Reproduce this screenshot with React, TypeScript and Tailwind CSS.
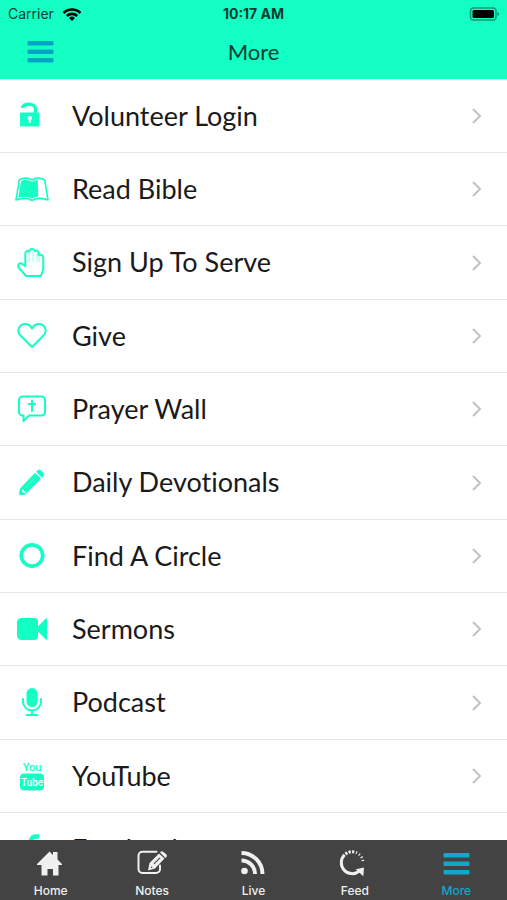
import { useState } from 'react';
import type { ReactNode } from 'react';

function Icon({ children }: { children: ReactNode }) {
  return (
    <svg viewBox="0 0 32 32" width="32" height="32" fill="none" stroke="currentColor" strokeWidth="2" strokeLinecap="round" strokeLinejoin="round" overflow="visible" aria-hidden="true">
      {children}
    </svg>
  );
}

const items: { label: string; icon: ReactNode }[] = [
  {
    label: 'Volunteer Login',
    icon: (
      <Icon>
        <path d="M6.500 8C6.500 3 19.500 2.500 19.500 9v5" strokeWidth="3.500" strokeLinecap="butt" />
        <path fillRule="evenodd" stroke="none" fill="currentColor" d="M5 12.500h17.500a1 1 0 0 1 1 1v12a1 1 0 0 1-1 1H5a1 1 0 0 1-1-1v-12a1 1 0 0 1 1-1zM13.800 16a2 2 0 0 0-1 3.800v3h2v-3a2 2 0 0 0-1-3.800z" />
      </Icon>
    ),
  },
  {
    label: 'Read Bible',
    icon: (
      <Icon>
        <path d="M3.300 7C7 4.500 12.500 4.500 16 7c3.500-2.500 9-2.500 12.700 0L32 27c-4.500-2-12-2.500-16 .5-4-3-11.500-2.500-16-.5z" strokeWidth="1.600" />
        <path d="M5 8.300c3.500-2 8-1.500 11 .7 1.500-1.200 3.500-2 5.700-2L22.300 23.500q-3.500.2-6.300 2Q10 22.500 2.300 24.500z" stroke="none" fill="currentColor" />
      </Icon>
    ),
  },
  {
    label: 'Sign Up To Serve',
    icon: (
      <Icon>
        <path d="M10 29 3 21c-2-3 0-5.500 3-4.300l3.300 2.600V6.500c0-2.500 2.500-3.200 3.900-2C13.800 1.200 18 1.200 18.700 4c1.800-1 4 0 4 2.500V8c2.500-.800 4.600.500 4.600 3v11L25 29z" />
        <path d="M13.200 5v9.500M17 5v9.500M21 6v8.500M23 8v6.500" strokeWidth="1" opacity=".45" />
      </Icon>
    ),
  },
  {
    label: 'Give',
    icon: (
      <Icon>
        <path d="M16 27 4.500 15.500C-1 9.500 5 3.500 9.500 4 13 4.500 15 6.500 16 8.500c1-2 3-4 6.500-4.500 4.500-.500 10.500 5.500 5 11.500z" />
      </Icon>
    ),
  },
  {
    label: 'Prayer Wall',
    icon: (
      <Icon>
        <path d="M6.500 3.500h19A3.500 3.500 0 0 1 29 7v12a3.500 3.500 0 0 1-3.500 3.500H13L7.500 28v-5.500h-1A3.500 3.500 0 0 1 3 19V7a3.500 3.500 0 0 1 3.500-3.500z" />
        <path d="M16 7.500V18M12.800 11h6.400" />
      </Icon>
    ),
  },
  {
    label: 'Daily Devotionals',
    icon: (
      <Icon>
        <g stroke="none" fill="currentColor">
          <path d="m20 4.800 1.800-1.600a2 2 0 0 1 2.800 0l3 3a2 2 0 0 1 0 2.800L26 10.700z" />
          <path fillRule="evenodd" d="m19 5.800 6 6L10 26.500a4 4 0 0 1-2 1.200l-3.500.5Q3 28.200 3 26.700l.7-4a4 4 0 0 1 1-2zM6.500 22.500l-.6 1.800 2 2 1.800-.6v-1.200H8v-2z" />
        </g>
        <path d="m10 20 9.500-9.500" stroke="white" strokeWidth=".5" opacity=".6" />
      </Icon>
    ),
  },
  {
    label: 'Find A Circle',
    icon: (
      <Icon>
        <circle cx="16" cy="15.500" r="10.700" strokeWidth="3.700" />
      </Icon>
    ),
  },
  {
    label: 'Sermons',
    icon: (
      <Icon>
        <path stroke="none" fill="currentColor" d="M5.500 5H18a4 4 0 0 1 4 4v4.500l7.500-7.800Q31 4.500 31 6v20q0 1.500-1.500.3L22 18.500V23a4 4 0 0 1-4 4H5.500A4.500 4.500 0 0 1 1 22.500v-13A4.500 4.500 0 0 1 5.500 5z" />
      </Icon>
    ),
  },
  {
    label: 'Podcast',
    icon: (
      <Icon>
        <rect x="10.500" y="1" width="11" height="19" rx="5.500" stroke="none" fill="currentColor" />
        <path d="M7 12v2.500a9 9 0 0 0 18 0V12M16 23.500V28M10.500 28h11" />
      </Icon>
    ),
  },
  {
    label: 'YouTube',
    icon: (
      <Icon>
        <rect x="4" y="13.500" width="24" height="17" rx="4" stroke="none" fill="currentColor" />
        <g stroke="none" textAnchor="middle" className="font-[Roboto,sans-serif] font-medium">
          <text x="16" y="11" fontSize="11" fill="currentColor">You</text>
          <text x="16" y="26" fontSize="10" fill="white">Tube</text>
        </g>
      </Icon>
    ),
  },
  {
    label: 'Facebook',
    icon: (
      <Icon>
        <path d="M23 3.500h-2.500c-4 0-5.500 1.500-5.500 5.500v20M10 14h12" strokeWidth="4.500" strokeLinecap="butt" />
      </Icon>
    ),
  },
];

const bars = (
  <g stroke="none" fill="currentColor">
    <rect x="3.500" y="5" width="26" height="4.600" rx="1" />
    <rect x="3.500" y="13.500" width="26" height="4.600" rx="1" />
    <rect x="3.500" y="22" width="26" height="4.600" rx="1" />
  </g>
);

const tabs: { label: string; icon: ReactNode }[] = [
  {
    label: 'Home',
    icon: <path stroke="none" fill="currentColor" d="M14.500 3.500 18 7V4h4.500v7.500L27 16v1h-3.500v10.500H18V21h-5.500v6.500h-6V17H2v-1z" />,
  },
  {
    label: 'Notes',
    icon: (
      <>
        <path d="M20.500 3.800h-14a4 4 0 0 0-4 4V21a4 4 0 0 0 4 4H20a4 4 0 0 0 4-4v-3.500" />
        <path fillRule="evenodd" stroke="none" fill="currentColor" d="M12 22.500 13.500 15 23 5.500l5.500 5-9.500 10zM15.300 18.300l-.5 1.800 1.800-.4zM17.500 15.500l.8.800 6-6-.8-.8z" />
        <path stroke="none" fill="currentColor" d="m24 4.500 1-1q1.200-.8 2.500.5l3 2.500q1 1.300 0 2.500l-1 .9z" />
      </>
    ),
  },
  {
    label: 'Live',
    icon: (
      <>
        <circle cx="7.500" cy="23" r="3.300" stroke="none" fill="currentColor" />
        <path d="M4.500 12.500A13.500 13.500 0 0 1 18 26M4.500 5A21 21 0 0 1 25.500 26" strokeWidth="4" strokeLinecap="butt" />
      </>
    ),
  },
  {
    label: 'Feed',
    icon: (
      <>
        <path d="M5.600 6.800a11 11 0 0 0 14.500 16.500" strokeWidth="3" strokeLinecap="butt" />
        <path stroke="none" fill="currentColor" d="m16.800 21.300 8.200-1.800-.7 8.700z" />
        <path d="M6.500 6A11 11 0 0 1 15.500 4" strokeWidth="3" strokeLinecap="butt" strokeDasharray="2.200 1.300" />
        <path d="M17 4.500a11 11 0 0 1 7 9" strokeWidth="2.500" strokeLinecap="butt" strokeDasharray="1.200 2.200" />
      </>
    ),
  },
  { label: 'More', icon: bars },
];

function StatusBar() {
  return (
    <div className="grid h-7 grid-cols-3 items-center px-2 font-[Inter,sans-serif] text-sm text-[#053f32]">
      <div className="flex items-center gap-2">
        <span>Carrier</span>
        <svg viewBox="0 0 20 15" width="20" height="15" fill="none" stroke="black" strokeWidth="2.600" aria-label="Wi-Fi">
          <path d="M1.500 6a12 12 0 0 1 17 0M4.800 9a7.500 7.500 0 0 1 10.400 0" />
          <path d="m10 14-3-3a4.300 4.300 0 0 1 6 0z" fill="black" stroke="none" />
        </svg>
      </div>
      <span className="text-center font-bold">10:17 AM</span>
      <svg className="justify-self-end" viewBox="0 0 30 14" width="30" height="14" aria-label="Battery">
        <rect x="1.500" y="1" width="25.500" height="12" rx="3" fill="none" stroke="black" strokeWidth="1.500" strokeOpacity=".4" />
        <rect x="3.500" y="3" width="21.500" height="8" rx="1.500" />
        <path d="M28.500 5v4q3-2 0-4z" opacity=".5" />
      </svg>
    </div>
  );
}

export default function App() {
  const [active, setActive] = useState('More');

  return (
    <div className="flex h-screen flex-col overflow-hidden bg-white font-[Lato,sans-serif]">
      <header className="h-20 shrink-0 border-b border-[#c4fff0] bg-[#14ffc4]">
        <StatusBar />
        <div className="grid h-12 grid-cols-3 items-center px-6">
          <button aria-label="Menu" className="text-[#00a5c4]">
            <Icon>{bars}</Icon>
          </button>
          <h1 className="text-center text-[22px] leading-6 text-[#053f32]">{active}</h1>
        </div>
      </header>

      <main className="min-h-0 flex-1 overflow-hidden">
        <ul>
          {items.map((item) => (
            <li key={item.label} className="h-[73px] border-b border-[#e6e6e6] nth-[3n]:h-[74px]">
              <a href="#" className="flex h-full items-center pr-6 pl-4 text-[27px] text-[#1a1a1a] [font-variant-ligatures:none]">
                <span className="flex w-8 shrink-0 justify-center text-[#14ffc4]">{item.icon}</span>
                <span className="ml-6 flex-1">{item.label}</span>
                <svg viewBox="0 0 12 18" width="12" height="18" fill="none" stroke="#c2c2c6" strokeWidth="2" aria-hidden="true">
                  <path d="m2 2 7 7-7 7" />
                </svg>
              </a>
            </li>
          ))}
        </ul>
      </main>

      <nav className="grid h-[60px] shrink-0 grid-cols-5 bg-[#434343] font-[Inter,sans-serif]">
        {tabs.map((tab) => (
          <button
            key={tab.label}
            onClick={() => setActive(tab.label)}
            className={`flex flex-col items-center pt-2 text-xs font-medium ${active === tab.label ? 'text-[#10a9cc]' : 'text-[#f0f0f0]'}`}
          >
            <Icon>{tab.icon}</Icon>
            <span className="leading-[22px]">{tab.label}</span>
          </button>
        ))}
      </nav>
    </div>
  );
}
